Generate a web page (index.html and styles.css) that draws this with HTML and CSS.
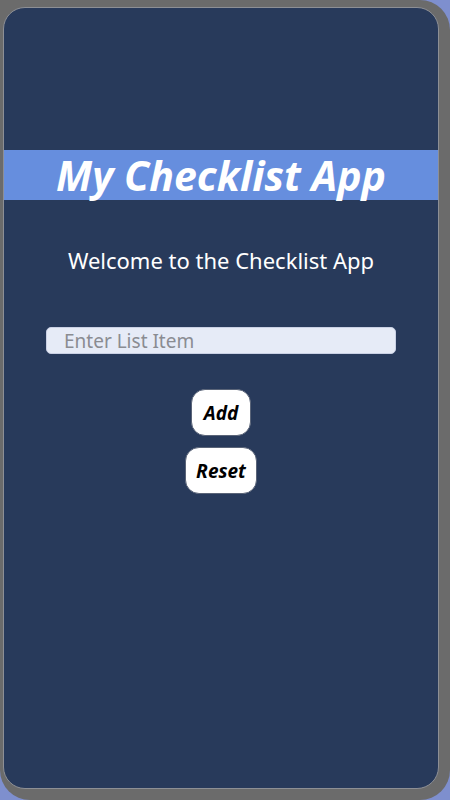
FILE: index.html
```html
<!DOCTYPE html>
<html lang="en">
<head>
    <meta charset="UTF-8">
    <meta name="viewport" content="width=device-width, initial-scale=1.0">
    <title>My Checklist App</title>
    <link rel="stylesheet" href="styles.css">
</head>
<body>

<div class="frame">
    <div class="app">
        <h1 class="title">My Checklist App</h1>
        <p class="welcome">Welcome to the Checklist App</p>

        <input type="text" id="item" class="item-input" placeholder="Enter List Item">

        <div class="buttons">
            <button class="btn">Add</button>
            <button class="btn">Reset</button>
        </div>
    </div>
</div>

</body>
</html>
```

FILE: styles.css
```css
body {
    margin: 0;
    font-family: "Noto Sans", "Open Sans", sans-serif;
    background-color: #7e8fce;
}

.frame {
    width: 450px;
    height: 800px;
    box-sizing: border-box;
    padding: 7px 11px 11px 3px;
    background-color: #6b6b6b;
    border-radius: 0 30px 30px 30px;
}

.app {
    height: 100%;
    box-sizing: border-box;
    display: flex;
    flex-direction: column;
    align-items: center;
    background-color: #283a5b;
    border: 1px solid #8d8f95;
    border-radius: 22px;
}

.title {
    width: 100%;
    margin: 142px 0 0;
    height: 50px;
    line-height: 50px;
    text-align: center;
    font-size: 41px;
    font-style: italic;
    font-weight: bold;
    color: #fff;
    background-color: #668ede;
}

.welcome {
    margin: 45px 0 0;
    font-size: 22px;
    color: #fff;
}

.item-input {
    width: 350px;
    height: 27px;
    box-sizing: border-box;
    margin-top: 52px;
    padding: 0 17px;
    border: 1px solid #c9d0e4;
    border-radius: 5px;
    background-color: #e6ebf7;
    font-family: inherit;
    font-size: 19px;
}

.item-input::placeholder {
    color: #8a8c92;
}

.buttons {
    display: flex;
    flex-direction: column;
    align-items: center;
    gap: 11px;
    margin-top: 35px;
}

.btn {
    min-width: 60px;
    height: 47px;
    padding: 0 10px;
    border: 1px solid #5a6478;
    border-radius: 14px;
    background-color: #fff;
    font-family: inherit;
    font-size: 19px;
    font-style: italic;
    font-weight: bold;
    color: #000;
}
```
